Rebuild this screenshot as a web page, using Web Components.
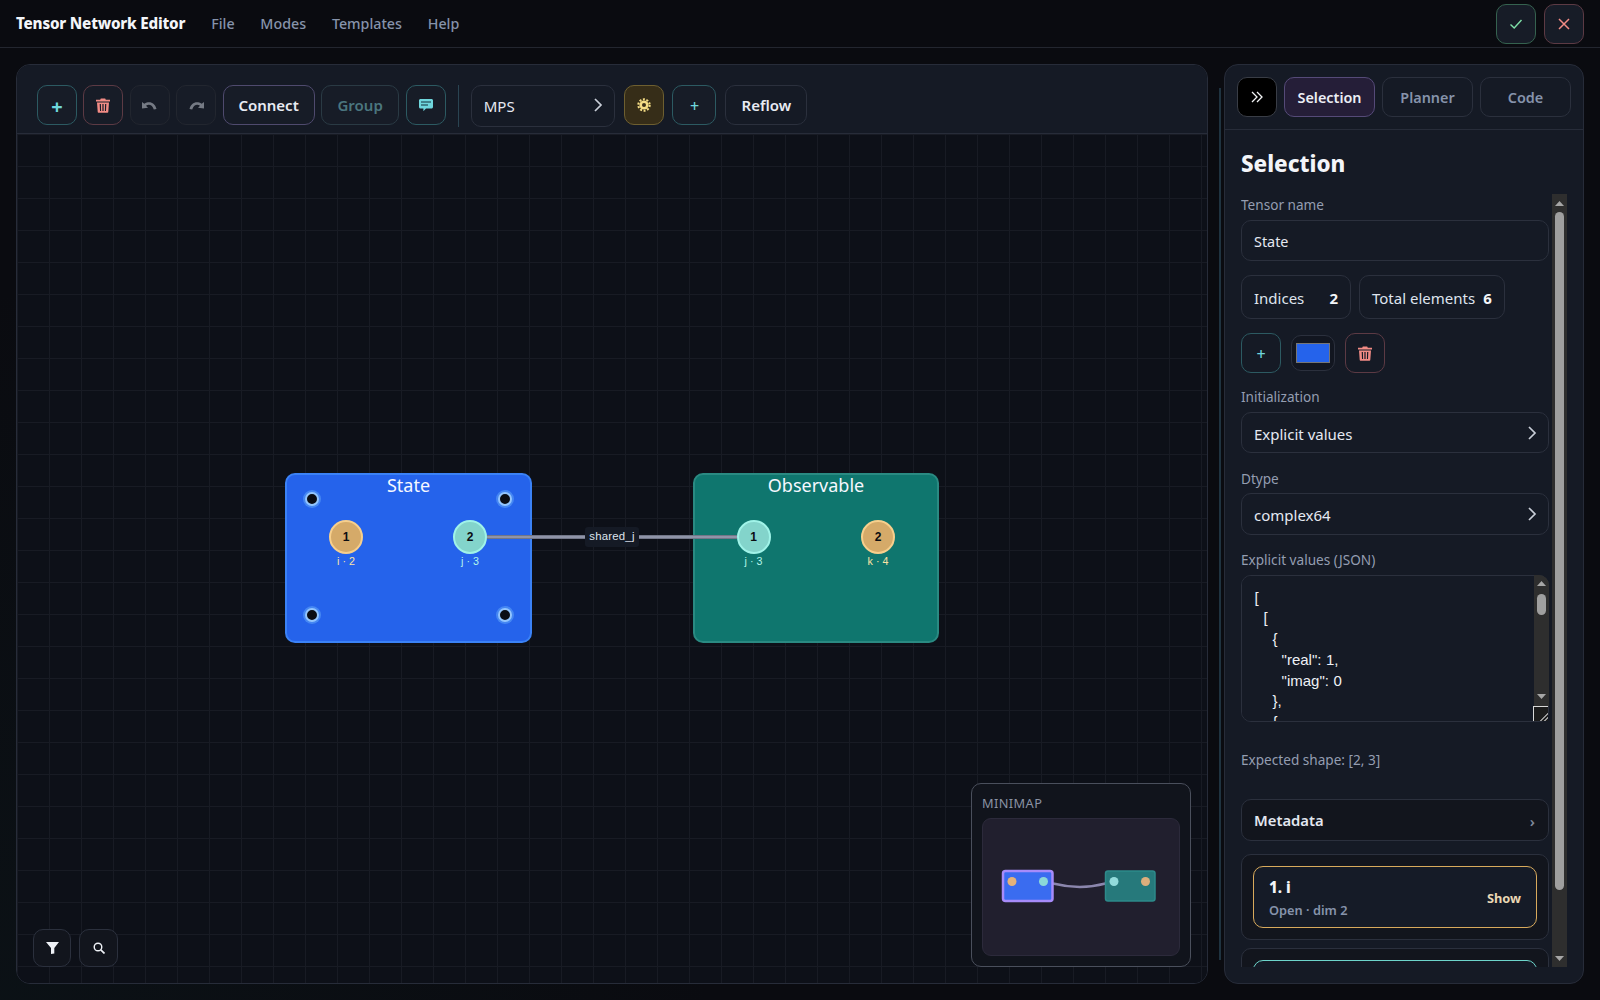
<!DOCTYPE html>
<html lang="en"><head><meta charset="utf-8"><title>Tensor Network Editor</title>
<style>
html,body{margin:0;height:100%;color-scheme:dark}
body{font-family:"Noto Sans",sans-serif;color:#e5e9f2;background:radial-gradient(circle at 0 100%,rgba(20,70,70,.1),transparent 38%),#0a0b10;overflow:hidden}
svg{display:block}
</style></head><body>

<template id="t-app"><style>
:host{display:flex;flex-direction:column;height:1000px;width:1600px}
main{flex:1;display:flex;padding:16px;min-height:0;box-sizing:border-box}
</style><slot name="top"></slot><main><slot></slot></main></template>

<template id="t-topbar"><style>
:host{display:flex;align-items:center;height:47px;padding:0 16px;border-bottom:1px solid #23262f;background:#0a0b10;flex:none}
.l{display:flex;align-items:center;padding-bottom:1px}
b{font-size:15.2px;font-weight:800;color:#f3f5f9;margin-right:26px;letter-spacing:-.2px}
nav{display:flex;gap:25.800px;font-size:14.250px;font-weight:500;color:#8693ab}
.r{margin-left:auto;display:flex;gap:8px}
</style><div class="l"><b><slot name="brand"></slot></b><nav><slot name="menu"></slot></nav></div><div class="r"><slot></slot></div></template>

<template id="t-btn"><style>
:host{display:inline-flex;align-items:center;justify-content:center;box-sizing:border-box;height:40px;min-width:40px;padding:0;border:1px solid #2b303d;border-radius:10px;background:#171c27;font-size:15px;font-weight:600;color:#e8ebf3;flex:none}
:host([tone=teal]){border-color:#2c5a62;color:#6fd6dc}
:host([tone=red]){border-color:#5c3a44;color:#f28b85}
:host([tone=green]){border-color:#35624f;color:#7fe0a8}
:host([tone=violet]){border-color:#4f4a6e}
:host([tone=gold]){border-color:#6e5f30;background:#362d18;color:#f5dd85}
:host([tone=dim]){border-color:#22262f;color:#757a84}
:host([tone=dimteal]){border-color:#2a3a44;color:#4b767f}
:host([tone=black]){background:#000;border-color:#393d46;color:#f3f4f6}
</style><slot></slot></template>

<template id="t-panel"><style>
:host{display:flex;flex-direction:column;width:1192px;flex:none;box-sizing:border-box;border:1px solid #272c39;border-radius:14px;overflow:hidden;background:#0d1018}
</style><slot></slot></template>

<template id="t-toolbar"><style>
:host{display:flex;align-items:flex-start;gap:6.4px;box-sizing:border-box;height:69px;padding:20px 20px 0;background:#151a25;border-bottom:1px solid #272c39;flex:none}
</style><slot></slot></template>

<template id="t-sep"><style>
:host{display:block;width:1px;height:42px;background:#2a4452;margin:0 5.6px;flex:none}
</style></template>

<template id="t-select"><style>
:host{display:flex;align-items:center;justify-content:space-between;box-sizing:border-box;height:41.6px;padding:0 11px 0 12px;border:1px solid #2b303d;border-radius:10px;background:#151a25;font-size:15px;color:#e5e9f2;flex:none}
svg{display:block;margin-top:-2px}
</style><slot></slot><svg width="10" height="16" viewBox="0 0 10 16" fill="none" stroke="#c9ced8" stroke-width="1.7"><path d="M2 2l6 6-6 6"/></svg></template>

<template id="t-canvas"><style>
:host{display:block;position:relative;flex:1;overflow:hidden;background-color:#0d1018;background-image:linear-gradient(to right,#181b24 1px,transparent 1px),linear-gradient(to bottom,#181b24 1px,transparent 1px);background-size:32px 32px}
</style><slot></slot></template>

<template id="t-node"><style>
:host{position:absolute;box-sizing:border-box;width:247px;height:170px;border:2px solid #3b82f6;border-radius:10px;background:#2563eb;text-align:center;color:#f5f8ff;font-size:18px;line-height:20px}
:host([teal]){background:#0f766e;border-color:#2a8a82;width:246px}
span{display:block}
</style><span><slot name="title"></slot></span><slot></slot></template>

<template id="t-handle"><style>
:host{position:absolute;box-sizing:border-box;width:14px;height:14px;border-radius:50%;background:#0a0d14;border:2px solid #93c5fd;box-shadow:0 0 0 2px rgba(96,165,250,.55)}
</style></template>

<template id="t-port"><style>
:host{position:absolute;width:34px;height:34px;box-sizing:border-box;border-radius:50%;border:2px solid #f7cf8c;background:#d5aa69;display:flex;align-items:center;justify-content:center;font:700 12px "Liberation Sans",sans-serif;color:#0b0d12}
:host([teal]){border-color:#a0f3e8;background:#83d4cb}
i{position:absolute;top:31px;left:-20px;width:70px;text-align:center;font:400 10.700px/16px "Liberation Sans",sans-serif;color:#fbe3a5;white-space:nowrap}
:host([teal]) i{color:#b4f5ea}
</style><slot></slot><i><slot name="label"></slot></i></template>

<template id="t-edge"><style>
:host{position:absolute;height:4px;background:linear-gradient(#5c6070,#8f94a8 30%,#8f94a8 70%,#5c6070);display:flex;align-items:center;justify-content:center}
span{display:block;background:#151a25;border-radius:3px;padding:0 4px;height:20px;font:400 11.400px/19px "Liberation Sans",sans-serif;color:#dfe4ee;letter-spacing:.2px}
</style><span><slot></slot></span></template>

<template id="t-tools"><style>
:host{position:absolute;left:16px;bottom:16px;display:flex;gap:8px}
</style><slot></slot></template>

<template id="t-tool"><style>
:host{display:flex;align-items:center;justify-content:center;width:38.400px;height:38px;box-sizing:border-box;border:1px solid #2b303d;border-radius:10px;background:#12151d;color:#eef1f6}
</style><slot></slot></template>

<template id="t-minimap"><style>
:host{position:absolute;right:16px;bottom:16px;width:220px;height:184px;box-sizing:border-box;border:1px solid #4a4f5c;border-radius:10px;background:#11141c;padding:10px;display:flex;flex-direction:column;gap:6px}
h4{margin:0;font-size:12.800px;font-weight:400;letter-spacing:.4px;color:#8a92a3;line-height:18px}
div{flex:1;border:1px solid #2c2a3b;border-radius:9px;background:#211f2e}
svg{display:block}
</style><h4><slot name="title"></slot></h4><div><slot></slot></div></template>

<template id="t-resizer"><style>
:host{display:flex;justify-content:flex-end;width:16px;flex:none;padding:24px 3px 24px 0;box-sizing:border-box}
div{width:2px;background:#1f3340}
</style><div></div></template>

<template id="t-scrollbar"><style>
:host{display:flex;flex-direction:column;width:15px;flex:none;background:#2e2e2e;overflow:hidden}
.a{height:18px;flex:none;display:flex;align-items:center;justify-content:center}
.t{flex:1;min-height:0}
.h{width:9px;margin:var(--top,0) auto 0;height:var(--h,20px);background:#9f9f9f;border-radius:5px}
</style><div class="a"><svg width="9" height="5" viewBox="0 0 9 5" fill="#a6a6a6"><path d="M4.500 0 9 5H0z"/></svg></div><div class="t"><div class="h"></div></div><div class="a"><svg width="9" height="5" viewBox="0 0 9 5" fill="#a6a6a6"><path d="M0 0h9L4.500 5z"/></svg></div></template>

<template id="t-side"><style>
:host{display:flex;flex-direction:column;width:360px;flex:none;box-sizing:border-box;border:1px solid #272c39;border-radius:14px;background:#151a25;overflow:hidden}
.tabs{display:flex;gap:7px;box-sizing:border-box;height:65px;padding:12px 12px 0;border-bottom:1px solid #272c39;flex:none}
.tabs ::slotted(tn-tab){flex:1}
.body{flex:1;min-height:0;display:flex;flex-direction:column;padding:0 16px 16px}
h2{margin:0;height:64px;line-height:67px;font-size:22.400px;font-weight:800;color:#f3f5f9;flex:none}
.wrap{flex:1;min-height:0;display:flex;gap:3px}
.scroll{flex:1;min-width:0;overflow:hidden}
tn-scrollbar{--h:678px}
</style><div class="tabs"><slot name="tabs"></slot></div><div class="body"><h2><slot name="heading"></slot></h2><div class="wrap"><div class="scroll"><slot></slot></div><tn-scrollbar></tn-scrollbar></div></div></template>

<template id="t-tab"><style>
:host{display:flex;align-items:center;justify-content:center;height:40px;box-sizing:border-box;border:1px solid #2b303d;border-radius:10px;font-size:14.400px;font-weight:600;color:#8693ab}
:host([active]){background:#251e38;border-color:#554a78;color:#eceef5}
</style><slot></slot></template>

<template id="t-label"><style>
:host{display:block;font-size:13.600px;line-height:19.600px;color:#949db1;margin-bottom:5px;padding-top:1px}
</style><slot></slot></template>

<template id="t-input"><style>
:host{display:block}
input{display:block;width:100%;box-sizing:border-box;height:41.600px;padding:2px 12px 0;border:1px solid #2b303d;border-radius:10px;background:#151a25;color:#e5e9f2;font:400 14.400px "Noto Sans",sans-serif;outline:0}
</style><input value="State" aria-label="Tensor name"></template>

<template id="t-stats"><style>
:host{display:flex;gap:8px;margin-top:14px}
</style><slot></slot></template>

<template id="t-stat"><style>
:host{display:flex;justify-content:space-between;align-items:center;gap:8px;height:43.600px;box-sizing:border-box;padding:2px 12px 0;border:1px solid #2b303d;border-radius:10px;font-size:15px;color:#dfe4ee}
b{font-weight:700;color:#f3f5f9}
</style><slot></slot><b><slot name="v"></slot></b></template>

<template id="t-actions"><style>
:host{display:flex;align-items:center;gap:10px;margin-top:14.400px;height:40px}
</style><slot></slot></template>

<template id="t-swatch"><style>
:host{display:flex;align-items:center;justify-content:center;width:44px;height:36px;box-sizing:border-box;border:1px solid #2b303d;border-radius:10px;background:#121620}
div{width:34px;height:20px;background:#2563eb;border:1px solid #767676;box-sizing:border-box}
</style><div></div></template>

<template id="t-json"><style>
:host{display:block;position:relative}
textarea{display:block;width:100%;box-sizing:border-box;height:147px;padding:12px 12px 11px 12.500px;border:1px solid #2b303d;border-radius:10px;background:#151a25;color:#eef1f6;font:400 15px/20.700px "Liberation Sans",sans-serif;word-spacing:.35px;outline:0;resize:vertical;overflow-y:scroll;white-space:pre}
textarea::-webkit-resizer{background:linear-gradient(135deg,transparent 70%,#9a9a9a 70%,#9a9a9a 76%,transparent 76%,transparent 84%,#9a9a9a 84%,#9a9a9a 90%,transparent 90%),#1c1c1c;border-top:1px solid #d8d8d8;border-left:1px solid #d8d8d8}
tn-scrollbar{position:absolute;top:0;right:0;bottom:16px;border-top-right-radius:10px;--top:1px;--h:21px}
</style><textarea aria-label="Explicit values" spellcheck="false"></textarea><tn-scrollbar></tn-scrollbar></template>

<template id="t-note"><style>
:host{display:block;font-size:13.600px;line-height:19.600px;color:#949db1;margin-top:28px}
</style><slot></slot></template>

<template id="t-disclosure"><style>
:host{display:flex;align-items:center;justify-content:space-between;height:42px;box-sizing:border-box;margin-top:30px;padding:0 13px 0 12px;border:1px solid #2b303d;border-radius:10px;background:#12151d;font-size:14.800px;font-weight:600;color:#e3e7f0}
span{font-weight:600;color:#7f889b;font-size:15px;margin-top:2px}
</style><slot></slot><span>›</span></template>

<template id="t-index"><style>
:host{display:block;box-sizing:border-box;height:86px;margin-top:13px;padding:11px;border:1px solid #2b303d;border-radius:10px;background:#12151d}
:host([shared]){margin-top:8px}
.c{display:flex;align-items:center;justify-content:space-between;box-sizing:border-box;height:62px;padding:1px 15px 0 15px;border:1px solid #d8aa5c;border-radius:10px;background:#151b27}
:host([shared]) .c{border-color:#6dd5cb}
b{display:block;font-size:15.200px;font-weight:800;color:#f3f5f9;line-height:20px}
small{display:block;font-size:12.800px;font-weight:600;color:#8693ab;line-height:18px;margin-top:4px}
em{font-style:normal;font-size:12.800px;font-weight:700;color:#e9d7b4}
:host([shared]) em{color:#b9ece4}
</style><div class="c"><div><b><slot name="n"></slot></b><small><slot name="d"></slot></small></div><em><slot></slot></em></div></template>

<tn-app>
  <tn-topbar slot="top">
    <span slot="brand">Tensor Network Editor</span>
    <span slot="menu">File</span><span slot="menu">Modes</span><span slot="menu">Templates</span><span slot="menu">Help</span>
    <tn-btn tone="green"><svg width="14" height="14" viewBox="0 0 14 14" fill="none" stroke="currentColor" stroke-width="1.400"><path d="M1.500 7.500 5.200 11 12.500 3"/></svg></tn-btn>
    <tn-btn tone="red"><svg width="14" height="14" viewBox="0 0 14 14" fill="none" stroke="currentColor" stroke-width="1.500"><path d="M2 2l10 10M12 2 2 12"/></svg></tn-btn>
  </tn-topbar>

  <tn-panel>
    <tn-toolbar>
      <tn-btn tone="teal" style="font-size:20px;font-weight:700;padding-top:2px">+</tn-btn>
      <tn-btn tone="red"><svg width="14" height="15" viewBox="0 0 14 15" fill="currentColor"><path d="M4.800.5h4.400l.6 1.200H14v1.700H0V1.700h4.200z"/><path fill-rule="evenodd" d="M1 4.400h12l-.7 9.300c0 .6-.5 1-1 1H2.700c-.5 0-1-.4-1-1zM3.700 6l.3 7h1.100L4.900 6zm2.700 0v7h1.200V6zm2.700 0-.2 7H10l.3-7z"/></svg></tn-btn>
      <tn-btn tone="dim"><svg width="15" height="9" viewBox="0 0 15 9" fill="currentColor"><path d="M0 1v6.500l6-.8-2-1.900C6.500 3 10 3.300 11.800 8.500L14.500 8C13 1.800 7.500-.5 2.300 2.800z"/></svg></tn-btn>
      <tn-btn tone="dim"><svg width="15" height="9" viewBox="0 0 15 9" fill="currentColor"><path d="M15 1v6.500l-6-.8 2-1.900C8.500 3 5 3.300 3.200 8.500L.5 8C2 1.800 7.500-.5 12.700 2.800z"/></svg></tn-btn>
      <tn-btn tone="violet" style="width:92px">Connect</tn-btn>
      <tn-btn tone="dimteal" style="width:78.400px">Group</tn-btn>
      <tn-btn tone="teal"><svg width="14" height="13" viewBox="0 0 14 13"><path fill="#6fd6dc" d="M1.500 0h11c.8 0 1.500.7 1.500 1.500v6.500c0 .8-.7 1.500-1.500 1.500H7l-2.600 2.700V9.500H1.500C.7 9.500 0 8.800 0 8V1.500C0 .7.700 0 1.500 0z"/><path stroke="#12303a" stroke-width="1.200" d="M2 3h10M2 6h7"/></svg></tn-btn>
      <tn-sep></tn-sep>
      <tn-select style="width:144px;height:42px">MPS</tn-select>
      <tn-btn tone="gold" style="margin-left:2.500px"><svg width="14" height="14" viewBox="0 0 14 14"><circle cx="7" cy="7" r="4.600" fill="#f5dd85"/><circle cx="7" cy="7" r="5.700" fill="none" stroke="#f5dd85" stroke-width="2" stroke-dasharray="2 1.580"/><circle cx="7" cy="7" r="2" fill="#3b3019"/></svg></tn-btn>
      <tn-btn tone="teal" style="width:44px;margin-left:2.500px;font-size:16px;font-weight:500;padding-top:2px">+</tn-btn>
      <tn-btn style="width:82px;margin-left:2.500px;background:#151a25">Reflow</tn-btn>
    </tn-toolbar>

    <tn-canvas>
      <tn-node style="left:268px;top:339px"><span slot="title">State</span>
        <tn-handle style="left:18px;top:17px"></tn-handle><tn-handle style="left:211px;top:17px"></tn-handle>
        <tn-handle style="left:18px;top:133px"></tn-handle><tn-handle style="left:211px;top:133px"></tn-handle>
        <tn-port style="left:42px;top:45px">1<span slot="label">i · 2</span></tn-port>
        <tn-port teal style="left:166px;top:45px">2<span slot="label">j · 3</span></tn-port>
      </tn-node>
      <tn-node teal style="left:676px;top:339px"><span slot="title">Observable</span>
        <tn-port teal style="left:41.500px;top:45px">1<span slot="label">j · 3</span></tn-port>
        <tn-port style="left:166px;top:45px">2<span slot="label">k · 4</span></tn-port>
      </tn-node>
      <tn-edge style="left:470px;top:401px;width:250px">shared_j</tn-edge>
      <tn-tools>
        <tn-tool><svg width="13" height="12" viewBox="0 0 13 12" fill="currentColor"><path d="M0 0h13L8.300 6v5.500L5 12V6z"/></svg></tn-tool>
        <tn-tool><svg width="12" height="12" viewBox="0 0 12 12" fill="none" stroke="currentColor" stroke-width="1.400"><circle cx="5" cy="5" r="3.800"/><path d="M7.800 7.800 11.500 11.500" stroke-width="1.700"/></svg></tn-tool>
      </tn-tools>
      <tn-minimap>
        <span slot="title">MINIMAP</span>
        <svg width="196" height="134" viewBox="0 0 196 134">
          <path d="M70 64.500C88 69 106 69 122.500 64.500" fill="none" stroke="#8b86ad" stroke-width="2.500"/>
          <rect x="20" y="52" width="49.500" height="30" rx="2.500" fill="#3a6cf0" stroke="#a78bfa" stroke-width="2.500"/>
          <rect x="122.500" y="52" width="49.500" height="30" rx="2.500" fill="#26797b" stroke="#2d8a8a" stroke-width="1.500"/>
          <circle cx="29" cy="62.500" r="4.500" fill="#e4b27a"/><circle cx="60.500" cy="62.500" r="4.500" fill="#8bd8d8"/>
          <circle cx="131" cy="62.500" r="4.500" fill="#92dbdb"/><circle cx="162.500" cy="62.500" r="4.500" fill="#dcae7c"/>
        </svg>
      </tn-minimap>
    </tn-canvas>
  </tn-panel>

  <tn-resizer></tn-resizer>

  <tn-side>
    <tn-btn slot="tabs" tone="black"><svg width="14" height="12" viewBox="0 0 14 12" fill="none" stroke="currentColor" stroke-width="1.300"><path d="M2 1l5 5-5 5M7 1l5 5-5 5"/></svg></tn-btn>
    <tn-tab slot="tabs" active>Selection</tn-tab>
    <tn-tab slot="tabs">Planner</tn-tab>
    <tn-tab slot="tabs">Code</tn-tab>
    <span slot="heading">Selection</span>

    <tn-label>Tensor name</tn-label>
    <tn-input></tn-input>
    <tn-stats>
      <tn-stat style="width:110px">Indices<span slot="v">2</span></tn-stat>
      <tn-stat>Total elements<span slot="v">6</span></tn-stat>
    </tn-stats>
    <tn-actions>
      <tn-btn tone="teal" style="background:#151a25;font-size:16px;font-weight:500;padding-top:1px">+</tn-btn>
      <tn-swatch></tn-swatch>
      <tn-btn tone="red" style="background:#151a25"><svg width="14" height="15" viewBox="0 0 14 15" fill="currentColor"><path d="M4.800.5h4.400l.6 1.200H14v1.700H0V1.700h4.200z"/><path fill-rule="evenodd" d="M1 4.400h12l-.7 9.300c0 .6-.5 1-1 1H2.700c-.5 0-1-.4-1-1zM3.700 6l.3 7h1.100L4.900 6zm2.700 0v7h1.200V6zm2.700 0-.2 7H10l.3-7z"/></svg></tn-btn>
    </tn-actions>
    <tn-label style="margin-top:12.800px">Initialization</tn-label>
    <tn-select style="padding-top:3px">Explicit values</tn-select>
    <tn-label style="margin-top:14.400px">Dtype</tn-label>
    <tn-select style="padding-top:3px">complex64</tn-select>
    <tn-label style="margin-top:14.400px">Explicit values (JSON)</tn-label>
    <tn-json></tn-json>
    <tn-note>Expected shape: [2, 3]</tn-note>
    <tn-disclosure>Metadata</tn-disclosure>
    <tn-index><span slot="n">1. i</span><span slot="d">Open · dim 2</span>Show</tn-index>
    <tn-index shared><span slot="n">2. j</span><span slot="d">Shared · dim 3</span>Show</tn-index>
  </tn-side>
</tn-app>

<script>
const names={'tn-scrollbar':'t-scrollbar','tn-app':'t-app','tn-topbar':'t-topbar','tn-btn':'t-btn','tn-panel':'t-panel','tn-toolbar':'t-toolbar','tn-sep':'t-sep','tn-select':'t-select','tn-canvas':'t-canvas','tn-node':'t-node','tn-handle':'t-handle','tn-port':'t-port','tn-edge':'t-edge','tn-tools':'t-tools','tn-tool':'t-tool','tn-minimap':'t-minimap','tn-resizer':'t-resizer','tn-side':'t-side','tn-tab':'t-tab','tn-label':'t-label','tn-input':'t-input','tn-stats':'t-stats','tn-stat':'t-stat','tn-actions':'t-actions','tn-swatch':'t-swatch','tn-json':'t-json','tn-note':'t-note','tn-disclosure':'t-disclosure','tn-index':'t-index'};
const json='[\n  [\n    {\n      "real": 1,\n      "imag": 0\n    },\n    {\n      "real": 0,\n      "imag": 0\n    }\n  ]\n]';
for(const [tag,id] of Object.entries(names)){
  customElements.define(tag,class extends HTMLElement{
    constructor(){super();const s=this.attachShadow({mode:'open'});s.appendChild(document.getElementById(id).content.cloneNode(true));
      if(tag==='tn-json')s.querySelector('textarea').value=json;}
  });
}
</script>
</body></html>
